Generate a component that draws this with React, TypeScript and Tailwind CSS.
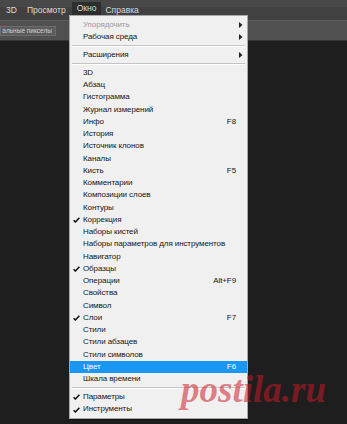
import React from "react";

type Item =
  | { sep: true }
  | { label: string; check?: boolean; key?: string; arrow?: boolean; disabled?: boolean; active?: boolean };

const items: Item[] = [
  { label: "Упорядочить", arrow: true, disabled: true },
  { label: "Рабочая среда", arrow: true },
  { sep: true },
  { label: "Расширения", arrow: true },
  { sep: true },
  { label: "3D" },
  { label: "Абзац" },
  { label: "Гистограмма" },
  { label: "Журнал измерений" },
  { label: "Инфо", key: "F8" },
  { label: "История" },
  { label: "Источник клонов" },
  { label: "Каналы" },
  { label: "Кисть", key: "F5" },
  { label: "Комментарии" },
  { label: "Композиции слоев" },
  { label: "Контуры" },
  { label: "Коррекция", check: true },
  { label: "Наборы кистей" },
  { label: "Наборы параметров для инструментов" },
  { label: "Навигатор" },
  { label: "Образцы", check: true },
  { label: "Операции", key: "Alt+F9" },
  { label: "Свойства" },
  { label: "Символ" },
  { label: "Слои", check: true, key: "F7" },
  { label: "Стили" },
  { label: "Стили абзацев" },
  { label: "Стили символов" },
  { label: "Цвет", key: "F6", active: true },
  { label: "Шкала времени" },
  { sep: true },
  { label: "Параметры", check: true },
  { label: "Инструменты", check: true },
];

function Check({ white }: { white?: boolean }) {
  return (
    <svg width="7" height="6" viewBox="0 0 7 6" className="absolute left-[3px] top-[3.5px]">
      <path d="M0.6 3.2 L2.4 5 L6.4 0.8" fill="none" stroke={white ? "#fff" : "#111"} strokeWidth="1.5" />
    </svg>
  );
}

function Arrow() {
  return (
    <svg width="4" height="6" viewBox="0 0 4 6" className="absolute right-[4px] top-[3px]">
      <path d="M0 0 L3.5 3 L0 6 Z" fill="#222" />
    </svg>
  );
}

export default function App() {
  return (
    <div
      className="relative w-[347px] h-[424px] overflow-hidden bg-[#1e1e1e]"
      style={{ fontFamily: '"Liberation Sans", Arial, sans-serif' }}
    >
      {/* menu bar */}
      <div className="h-[20px] bg-[linear-gradient(#484848_0,#484848_7px,#414141_7px,#414141_100%)] flex items-start text-[8.5px] text-[#dcdcdc] pl-[6px]">
        <span className="mt-[4px] mr-[10px]">3D</span>
        <span className="mt-[4px] mr-[6px]">Просмотр</span>
        <span className="h-[13px] mt-[2px] px-[5px] bg-[#2e2e2e] flex items-center mr-[4px]">Окно</span>
        <span className="mt-[4px]">Справка</span>
      </div>
      {/* options bar */}
      <div className="h-[21px] bg-[#505050] border-t border-[#5c5c5c] border-b border-b-[#333] flex items-center">
        <div className="h-[10px] w-[56px] bg-[#5c5c5c] border border-[#6c6c6c] text-[6.5px] leading-[8px] text-[#cfcfcf] flex items-center justify-end pr-[3px] whitespace-nowrap overflow-hidden">
          альные пикселы
        </div>
      </div>
      {/* workspace */}
      <div className="h-[377px] bg-[#1e1e1e]" />

      {/* dropdown menu */}
      <div className="absolute left-[69px] top-[15px] w-[179px] bg-[#f0f0f0] border border-[#a8a8a8] pt-[3px] pb-[3px] shadow-[0_1px_0_#111]">
        {items.map((it, i) =>
          "sep" in it ? (
            <div key={i} className="h-[5.5px] flex items-center px-[2px]">
              <div className="w-full h-[2px] border-t border-[#c4c4c4] border-b border-b-white" />
            </div>
          ) : (
            <div
              key={i}
              className={
                "relative h-[12.25px] flex items-center pl-[13px] pr-[11px] text-[8px] tracking-[-0.1px] leading-[12px] whitespace-nowrap " +
                (it.active ? "bg-[#1a97f5] text-white" : it.disabled ? "text-[#9a9a9a]" : "text-[#161616]")
              }
            >
              {it.check && <Check white={it.active} />}
              <span className="flex-1">{it.label}</span>
              {it.key && <span>{it.key}</span>}
              {it.arrow && <Arrow />}
            </div>
          )
        )}
      </div>

      {/* watermark */}
      <div
        className="absolute left-[181px] top-[368px] text-[37px] leading-[44px] font-bold italic text-[rgba(205,25,40,0.55)] pointer-events-none"
        style={{ fontFamily: '"Liberation Serif", "Times New Roman", serif' }}
      >
        postila.ru
      </div>
    </div>
  );
}
